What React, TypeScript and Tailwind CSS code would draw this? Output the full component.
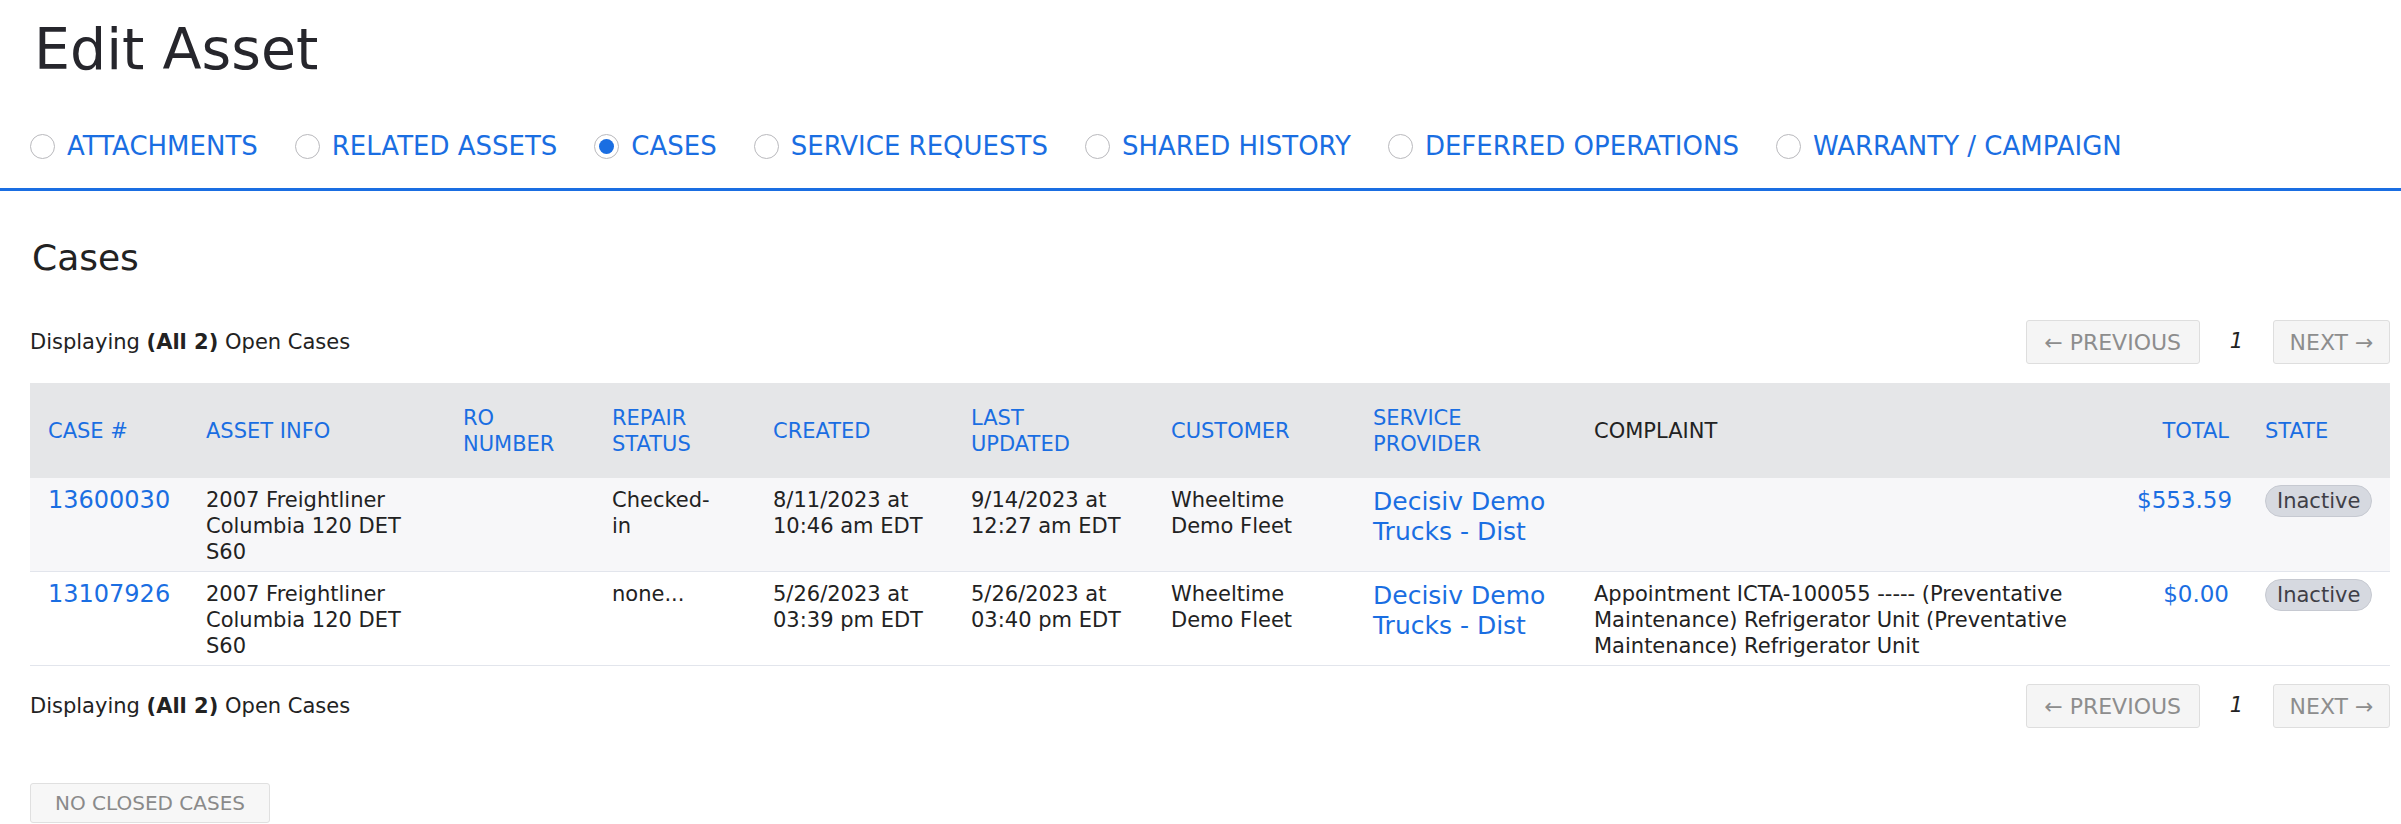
import React from "react";

type CaseRow = {
  id: string;
  asset: string;
  ro: string;
  repair: string;
  created: string[];
  updated: string[];
  customer: string;
  provider: string;
  complaint: string;
  total: string;
  state: string;
};

const tabs = [
  { label: "ATTACHMENTS", active: false },
  { label: "RELATED ASSETS", active: false },
  { label: "CASES", active: true },
  { label: "SERVICE REQUESTS", active: false },
  { label: "SHARED HISTORY", active: false },
  { label: "DEFERRED OPERATIONS", active: false },
  { label: "WARRANTY / CAMPAIGN", active: false },
];

const columns = [
  { lines: ["CASE #"], width: "w-[158px]", link: true },
  { lines: ["ASSET INFO"], width: "w-[257px]", link: true },
  { lines: ["RO", "NUMBER"], width: "w-[149px]", link: true },
  { lines: ["REPAIR", "STATUS"], width: "w-[161px]", link: true },
  { lines: ["CREATED"], width: "w-[198px]", link: true },
  { lines: ["LAST", "UPDATED"], width: "w-[200px]", link: true },
  { lines: ["CUSTOMER"], width: "w-[202px]", link: true },
  { lines: ["SERVICE", "PROVIDER"], width: "w-[221px]", link: true },
  { lines: ["COMPLAINT"], width: "w-[543px]", link: false },
  { lines: ["TOTAL"], width: "w-[128px]", link: true, right: true },
  { lines: ["STATE"], width: "w-[143px]", link: true },
];

const rows: CaseRow[] = [
  {
    id: "13600030",
    asset: "2007 Freightliner Columbia 120 DET S60",
    ro: "",
    repair: "Checked-in",
    created: ["8/11/2023 at", "10:46 am EDT"],
    updated: ["9/14/2023 at", "12:27 am EDT"],
    customer: "Wheeltime Demo Fleet",
    provider: "Decisiv Demo Trucks - Dist",
    complaint: "",
    total: "$553.59",
    state: "Inactive",
  },
  {
    id: "13107926",
    asset: "2007 Freightliner Columbia 120 DET S60",
    ro: "",
    repair: "none...",
    created: ["5/26/2023 at", "03:39 pm EDT"],
    updated: ["5/26/2023 at", "03:40 pm EDT"],
    customer: "Wheeltime Demo Fleet",
    provider: "Decisiv Demo Trucks - Dist",
    complaint:
      "Appointment ICTA-100055 ----- (Preventative Maintenance) Refrigerator Unit (Preventative Maintenance) Refrigerator Unit",
    total: "$0.00",
    state: "Inactive",
  },
];

function Radio({ checked }: { checked: boolean }) {
  return (
    <span className="flex h-[25px] w-[25px] shrink-0 items-center justify-center rounded-full border border-[#b9b9bd] bg-white">
      {checked && <span className="h-[15px] w-[15px] rounded-full bg-[#1a6ee2]" />}
    </span>
  );
}

function Pager() {
  return (
    <div className="flex items-center gap-[30px]">
      <button className="flex h-[44px] w-[174px] items-center justify-center rounded-[3px] border border-[#dedede] bg-[#f5f5f5] text-[22px] text-[#8d8d8d]">
        ← PREVIOUS
      </button>
      <span className="text-[21px] italic text-[#222]">1</span>
      <button className="flex h-[44px] w-[117px] items-center justify-center rounded-[3px] border border-[#dedede] bg-[#f5f5f5] text-[22px] text-[#8d8d8d]">
        NEXT →
      </button>
    </div>
  );
}

function Displaying() {
  return (
    <div className="flex items-center justify-between">
      <p className="text-[21px] leading-[26px] text-[#222]">
        Displaying <span className="font-bold">(All 2)</span> Open Cases
      </p>
      <Pager />
    </div>
  );
}

export default function App() {
  return (
    <div className="min-h-screen bg-white font-['DejaVu_Sans',sans-serif] text-[#222]">
      <div className="border-b-[3px] border-[#1a6ee2] pb-[27px]">
        <h1 className="pl-[34px] pt-[21px] text-[57px] leading-[57px] text-[#26262c]">Edit Asset</h1>
        <div className="mt-[53px] flex items-center pl-[30px]">
          {tabs.map((t) => (
            <div key={t.label} className="mr-[37px] flex h-[30px] items-center gap-[12px]">
              <Radio checked={t.active} />
              <span className="text-[26px] leading-[30px] text-[#1a6ee2]">{t.label}</span>
            </div>
          ))}
        </div>
      </div>

      <div className="pl-[30px] pr-[11px]">
        <h2 className="pl-[2px] pt-[49px] text-[36px] leading-[36px] text-[#222]">Cases</h2>

        <div className="mt-[44px]">
          <Displaying />
        </div>

        <table className="mt-[19px] w-[2360px] table-fixed border-collapse text-[21px] leading-[26px]">
          <colgroup>
            {columns.map((c, i) => (
              <col key={i} className={c.width} />
            ))}
          </colgroup>
          <thead>
            <tr className="bg-[#e5e6e8]">
              {columns.map((c, i) => (
                <th
                  key={i}
                  className={`h-[95px] px-[18px] align-middle font-normal ${c.right ? "text-right" : "text-left"} ${
                    c.link ? "text-[#1a6ee2]" : "text-[#222]"
                  }`}
                >
                  {c.lines.map((l) => (
                    <div key={l}>{l}</div>
                  ))}
                </th>
              ))}
            </tr>
          </thead>
          <tbody>
            {rows.map((r, i) => (
              <tr key={r.id} className={`border-b border-[#e2e5ec] ${i === 0 ? "bg-[#f7f7f9]" : "bg-white"}`}>
                <td className="px-[18px] pb-[6px] pt-[9px] align-top text-[24px] text-[#1a6ee2]">{r.id}</td>
                <td className="px-[18px] pb-[6px] pt-[9px] align-top">{r.asset}</td>
                <td className="px-[18px] pb-[6px] pt-[9px] align-top">{r.ro}</td>
                <td className="px-[18px] pb-[6px] pt-[9px] align-top">
                  <div className="max-w-[104px]">{r.repair}</div>
                </td>
                <td className="px-[18px] pb-[6px] pt-[9px] align-top">
                  {r.created.map((l) => (
                    <div key={l}>{l}</div>
                  ))}
                </td>
                <td className="px-[18px] pb-[6px] pt-[9px] align-top">
                  {r.updated.map((l) => (
                    <div key={l}>{l}</div>
                  ))}
                </td>
                <td className="px-[18px] pb-[6px] pt-[9px] align-top">{r.customer}</td>
                <td className="px-[18px] pb-[6px] pt-[9px] align-top text-[25px] leading-[30px] text-[#1a6ee2]">
                  {r.provider}
                </td>
                <td className="px-[18px] pb-[6px] pt-[9px] align-top">{r.complaint}</td>
                <td className="px-[18px] pb-[6px] pt-[9px] text-right align-top text-[23px] text-[#1a6ee2]">{r.total}</td>
                <td className="px-[18px] pb-[6px] pt-[7px] align-top">
                  <span className="inline-block rounded-full border border-[#c6c9d1] bg-[#d6d9e0] px-[11px] text-[21px] leading-[30px] text-[#3f3f47]">
                    {r.state}
                  </span>
                </td>
              </tr>
            ))}
          </tbody>
        </table>

        <div className="mt-[18px]">
          <Displaying />
        </div>

        <button className="mt-[55px] flex h-[40px] w-[240px] items-center justify-center rounded-[3px] border border-[#e0e0e0] bg-[#f7f7f7] text-[20px] text-[#8a8a8a]">
          NO CLOSED CASES
        </button>
      </div>
    </div>
  );
}
